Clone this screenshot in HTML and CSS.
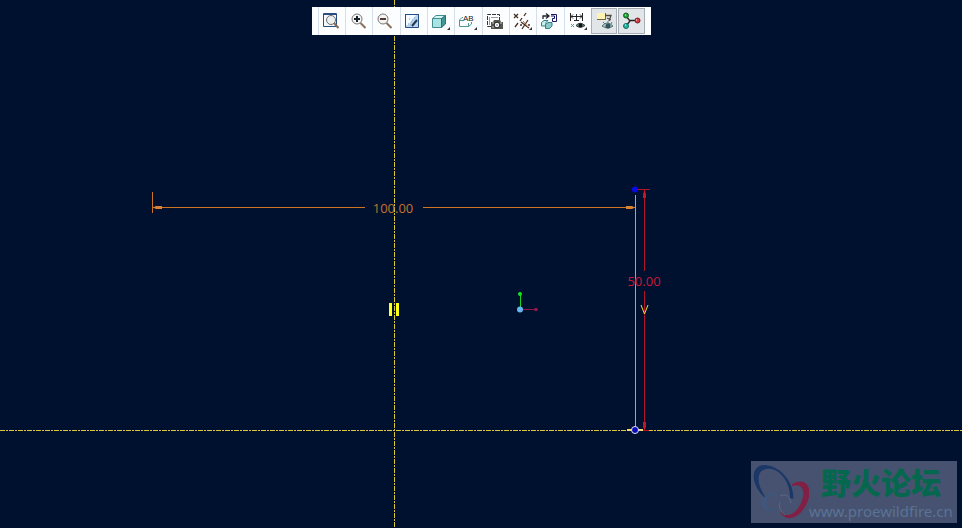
FILE: index.html
```html
<!DOCTYPE html>
<html lang="zh-CN">
<head>
<meta charset="utf-8">
<title>Sketch</title>
<link rel="stylesheet" href="styles.css">
</head>
<body>
<main class="workspace">
  <svg class="sketch" viewBox="0 0 962 528" preserveAspectRatio="xMidYMid slice" role="img" aria-label="Sketch geometry">
    <path class="axis" d="M394.5 0V528M0 430.5H962"/>
    <g class="dim-h">
      <path d="M152.5 192V213M153 207.5H365M423 207.5H635"/>
      <path class="head" d="M153 207.5L156 206H162V209H156ZM635 207.5L632 206H626V209H632Z"/>
      <text x="393" y="213">100.00</text>
    </g>
    <path class="mark" d="M389 303H392V316H389ZM396 303H399V316H396Z"/>
    <path class="edge" d="M635.5 195V430"/>
    <g class="dim-v">
      <path d="M636 189.5H650M636 430.5H649M644.5 190V271M644.5 291V430"/>
      <path class="head" d="M644.5 190L643 194V198H646V194ZM644.5 430L643 427V422H646V427Z"/>
      <text x="644" y="286">50.00</text>
    </g>
    <path class="vertical" d="M641 305L644.5 314L648 305"/>
    <circle class="point" cx="635" cy="189.500" r="3"/>
    <path class="tick" d="M627 430H643"/>
    <circle class="vertex" cx="635" cy="430" r="3.500"/>
    <path d="M520.500 309V294" stroke="#16d51d"/>
    <path d="M521 309.500H536" stroke="#8b1744"/>
    <circle cx="520" cy="294" r="2" fill="#16e31d"/>
    <circle cx="536" cy="309.500" r="1.800" fill="#9b1744"/>
    <circle cx="520" cy="309.500" r="3" fill="#66b5f1"/>
  </svg>

  <nav class="toolbar" aria-label="View tools">
    <button class="tool" type="button" aria-label="Refit"><svg viewBox="0 0 27 28"><path d="M5.500 6.500H18.500V19.500H5.500Z" fill="#f6f9fc" stroke="#294d80"/><path d="M5 7.500H19" stroke="#294d80"/><circle cx="13" cy="13" r="4.500" fill="#eceff0" stroke="#6c6c6c"/><path d="M16 16L20.500 21" stroke="#806b56" stroke-width="2"/></svg></button>
    <button class="tool" type="button" aria-label="Zoom in"><svg viewBox="0 0 27 28"><circle cx="12" cy="12" r="5" fill="#f5f5f3" stroke="#777"/><path d="M9 12H15M12 9V15" stroke="#19212b" stroke-width="2"/><path d="M15.500 16L20.500 21" stroke="#886f5d" stroke-width="2"/></svg></button>
    <button class="tool" type="button" aria-label="Zoom out"><svg viewBox="0 0 27 28"><circle cx="11" cy="12" r="5" fill="#f5f5f3" stroke="#777"/><path d="M8 12H14" stroke="#553a36" stroke-width="2"/><path d="M14.500 16L19.500 21" stroke="#886f5d" stroke-width="2"/></svg></button>
    <button class="tool" type="button" aria-label="Repaint"><svg viewBox="0 0 27 28"><path d="M5.500 7.500H18.500V20.500H5.500Z" fill="#bcd5ef" stroke="#254f83"/><path d="M6 8H16L8 18H6Z" fill="#f4faff"/><path d="M5 7.500H19" stroke="#254f83"/><path d="M12 19L17 13" stroke="#24364c" stroke-width="2"/><path d="M9 12H10M12 13H13M11 15H12M14 11H15M8 17H9M10 18H11" stroke="#73a3cb"/></svg></button>
    <button class="tool" type="button" aria-label="Display style"><svg viewBox="0 0 27 28"><path d="M5.500 11.500L9 8.500H18.500L15 11.500Z" fill="#d3f6f4" stroke="#438d91"/><path d="M5.500 11.500H14.500V20.500H5.500Z" fill="#a9e4e2" stroke="#438d91"/><path d="M14.500 11.500L18.500 8.500V17L14.500 20.500Z" fill="#429897" stroke="#316e75"/><path d="M23 20V23H20Z" fill="#333"/></svg></button>
    <button class="tool" type="button" aria-label="Saved orientations"><svg viewBox="0 0 27 28"><path d="M9 10.500H8L5.500 13V19.500H14.500L17.500 17V15M5.500 13.500H9M14.500 16V20" fill="none" stroke="#4b9a99"/><text class="tiny" x="9" y="14">AB</text><path d="M23 20V23H20Z" fill="#333"/></svg></button>
    <button class="tool" type="button" aria-label="View manager"><svg viewBox="0 0 27 28"><path d="M9 19.500H5.500V7.500H17.500V13" fill="none" stroke="#333" stroke-dasharray="4 1"/><path d="M7.500 18V10M9 10.500H16" stroke="#999"/><path d="M9 15H11L12 13H18L19 15H21V22H9Z" fill="#53564f"/><path d="M10 16H12M18 16H20M10 20H12" stroke="#c5c5b8"/><circle cx="15" cy="18" r="2.800" fill="#fff" stroke="#222"/><circle cx="15" cy="18" r="1" fill="#91aab5"/></svg></button>
    <button class="tool" type="button" aria-label="Datum display"><svg viewBox="0 0 27 28"><g stroke="#4b3021" stroke-width="1.300"><path d="M5 7L9 11M9 7L5 11M17 6L15 9M13 11L11 14M9 16L6 20M12 15L20 21M19 13L13 22M11 18H13M19 18H21"/></g><path d="M14 14L19 20" stroke="#ac764c"/><path d="M23 20V23H20Z" fill="#333"/></svg></button>
    <button class="tool" type="button" aria-label="Spin center"><svg viewBox="0 0 27 28"><path d="M5.500 15.500L8 13.500H12L10 15.500V19H5.500Z" fill="#c9eeee" stroke="#347f82"/><path d="M9.500 17.500L12 15.500H16V19L13.500 21.500H9.500Z" fill="#8ccac9" stroke="#347f82"/><path d="M7 12V9H12M10 6.500L13 9L10 11.500" fill="none" stroke="#20252d" stroke-width="1.300"/><path d="M15 7.500H20.500V14.500H16.500V11.500H18.500V9H15" fill="none" stroke="#171765"/></svg></button>
    <button class="tool" type="button" aria-label="Sketcher display"><svg viewBox="0 0 27 28"><path d="M6.500 6V14M18.500 6V14M7 9.500H18M9 7.500L7 9.500L9 11.500M16 7.500L18 9.500L16 11.500M12.500 7V14M10 13.500H15" fill="none" stroke="#252525"/><path d="M7 17L10 20M10 17L7 20" stroke="#4c9da0"/><path d="M12 18.500Q16 14 21 18.500Q16 22 12 18.500Z" fill="#669e99" stroke="#333"/><circle cx="16.500" cy="18.500" r="2" fill="#111"/><path d="M23 20V23H20Z" fill="#333"/></svg></button>
    <button class="tool pressed" type="button" aria-pressed="true" aria-label="Annotation display"><svg viewBox="0 0 27 28"><path d="M6 6H14V12H6Z" fill="#fff3b3"/><path d="M6 12.500H14M14.500 6V13" stroke="#75653e"/><path d="M14 8.500H20L18 14M16 11L20 13" fill="none" stroke="#4d4a40" stroke-width="1.300"/><path d="M11 19Q16 13 22 19Q17 23 11 19Z" fill="#acc4c5" stroke="#547377"/><circle cx="17" cy="19" r="2.500" fill="#315359"/><path d="M12 15L14 17M17 14V16M21 15L20 17" stroke="#62777a"/></svg></button>
    <button class="tool pressed" type="button" aria-pressed="true" aria-label="Model center"><svg viewBox="0 0 27 28"><path d="M8 9L12 14L8 19M12 13.500H20" fill="none" stroke="#222" stroke-width="1.300"/><circle cx="8" cy="8.500" r="2.500" fill="#24a536" stroke="#155b25"/><circle cx="8" cy="19" r="2.500" fill="#26b7a0" stroke="#126b67"/><circle cx="19.500" cy="13.500" r="2.500" fill="#d83b43" stroke="#791c28"/><path d="M7 8H8M7 18H8M18 13H19" stroke="#fff"/></svg></button>
  </nav>

  <aside class="watermark">
    <svg class="logo" viewBox="0 0 58 62" aria-hidden="true">
      <path d="M42 38C44 22 29 4 13 4C-3 5 1 28 16 38C6 26 4 10 15 8C28 5 40 22 39 37Z" fill="#1b3767"/>
      <path d="M41 23C58 14 63 31 54 46C46 59 33 61 29 50C36 58 45 53 50 42C56 29 50 22 41 25Z" fill="#812044"/>
      <path d="M30 33C20 29 8 37 11 45C14 50 22 51 28 49C21 49 15 47 15 42C15 36 22 33 30 33Z" fill="#3d587c"/>
      <path d="M29 35C35 32 39 36 40 42M29 41C27 46 30 51 34 54" fill="none" stroke="#586988"/>
    </svg>
    <div class="brand"><strong class="brand-name">野火论坛</strong><span class="brand-url">www.proewildfire.cn</span></div>
  </aside>
</main>
</body>
</html>
```
FILE: styles.css
```css
* {
  box-sizing: border-box;
}

body {
  margin: 0;
  background: #001130;
  font-family: "Noto Sans", "Noto Sans CJK SC", sans-serif;
}

.workspace {
  position: relative;
  display: flex;
  flex-direction: column;
  align-items: center;
  justify-content: space-between;
  min-height: 100vh;
  padding: 7px 5px 5px;
  overflow: hidden;
}

.sketch {
  position: absolute;
  inset: 0;
  width: 100%;
  height: 100%;
}

.axis {
  fill: none;
  stroke: #d9c83c;
  stroke-dasharray: 5 1 2 1;
}

.dim-h,
.dim-v {
  fill: none;
  stroke: #cf7423;
}

.dim-v {
  stroke: #b3122b;
}

.dim-h text,
.dim-v text {
  fill: #c4722e;
  stroke: none;
  font: 13px "Open Sans", sans-serif;
  text-anchor: middle;
}

.dim-v text {
  fill: #c91838;
}

.head {
  fill: #d88235;
  stroke: none;
}

.dim-v .head {
  fill: #c71624;
}

.mark {
  fill: #ffff18;
}

.edge {
  stroke: #66b5f8;
}

.vertical {
  fill: none;
  stroke: #f3dd39;
}

.point {
  fill: #0909e5;
}

.tick {
  stroke: #efdc78;
  stroke-width: 2;
}

.vertex {
  fill: #0808bd;
  stroke: #e4e4ef;
}

.toolbar {
  position: relative;
  display: grid;
  grid-template-columns: repeat(12, 1fr);
  grid-template-rows: 28px;
  width: 339px;
  max-width: 100%;
  padding: 0 5px 0 6px;
  background: #fcfdfe;
}

.tool {
  display: flex;
  align-items: center;
  min-width: 0;
  height: 28px;
  padding: 0;
  border: 0;
  border-left: 1px solid #d5dfe9;
  background: transparent;
}

.tool svg {
  flex: none;
  width: 27px;
  height: 28px;
  margin-left: -1px;
}

.pressed {
  height: 26px;
  margin: 1px 1px 1px 0;
  border: 1px solid #a6adb4;
  background: #e3e6e8;
}

.tiny {
  fill: #202020;
  font: 8px "Liberation Sans", sans-serif;
}

.watermark {
  position: relative;
  display: flex;
  align-self: flex-end;
  width: 206px;
  height: 62px;
  background: #465270;
}

.logo {
  flex: none;
  width: 58px;
  height: 62px;
}

.brand {
  display: flex;
  flex-direction: column;
  white-space: nowrap;
}

.brand-name {
  padding-left: 12px;
  color: #05684e;
  font: 900 30px/40px "Noto Sans CJK SC", sans-serif;
}

.brand-url {
  color: #5b7395;
  font-size: 15px;
  line-height: 20px;
}
```
